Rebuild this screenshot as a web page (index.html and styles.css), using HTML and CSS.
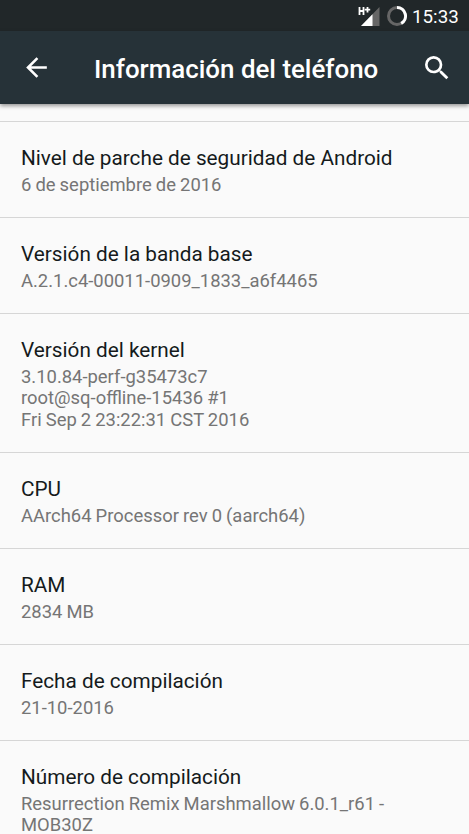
FILE: index.html
```html
<!DOCTYPE html>
<html lang="es">
<head>
<meta charset="utf-8">
<title>Información del teléfono</title>
<link rel="stylesheet" href="styles.css">
</head>
<body>
<div class="status">
  <svg class="signal" width="22" height="22" viewBox="0 0 22 22"><path d="M21.500 2V21H3Z" fill="#666"/><path d="M14.500 9.200V21H3Z" fill="#fff"/><path d="M1.500 2v8M5.500 2v8M1.500 6h4M9.500 2v5.500M6.800 4.700h5.400" stroke="#fff" stroke-width="1.800" fill="none"/></svg>
  <svg class="battery" width="20" height="20" viewBox="0 0 20 20" fill="none" stroke-width="3"><circle cx="10" cy="10" r="8.500" stroke="#666"/><path d="M10 1.500A8.500 8.500 0 0 1 14.200 17.400" stroke="#fff"/></svg>
  <span class="clock">15:33</span>
</div>
<header class="bar">
  <svg class="back" width="31" height="31" viewBox="0 0 24 24"><path fill="#fff" d="M20 11H7.830l5.590-5.590L12 4l-8 8 8 8 1.410-1.410L7.830 13H20z"/></svg>
  <h1>Información del teléfono</h1>
  <svg class="search" width="32" height="32" viewBox="0 0 24 24"><path fill="#fff" d="M15.500 14h-.79l-.28-.27A6.471 6.471 0 0 0 16 9.500 6.500 6.500 0 1 0 9.500 16c1.610 0 3.090-.59 4.230-1.570l.27.28v.79l5 4.990L20.490 19zm-6 0a4.500 4.500 0 1 1 0-9 4.500 4.500 0 0 1 0 9z"/></svg>
</header>
<main>
  <section><h2>Nivel de parche de seguridad de Android</h2><p>6 de septiembre de 2016</p></section>
  <section><h2>Versión de la banda base</h2><p>A.2.1.c4-00011-0909_1833_a6f4465</p></section>
  <section class="tall"><h2>Versión del kernel</h2><p>3.10.84-perf-g35473c7<br>root@sq-offline-15436 #1<br>Fri Sep 2 23:22:31 CST 2016</p></section>
  <section><h2>CPU</h2><p>AArch64 Processor rev 0 (aarch64)</p></section>
  <section><h2>RAM</h2><p>2834 MB</p></section>
  <section><h2>Fecha de compilación</h2><p>21-10-2016</p></section>
  <section><h2>Número de compilación</h2><p>Resurrection Remix Marshmallow 6.0.1_r61 -<br>MOB30Z</p></section>
</main>
</body>
</html>
```
FILE: styles.css
```css
* { box-sizing: border-box; margin: 0; }
body { height: 834px; overflow: hidden; background: #fafafa; font-family: Roboto, sans-serif; }
.status { height: 31px; background: #212729; display: flex; align-items: center; padding-left: 358px; color: #fff; }
.battery { margin-left: 7px; }
.clock { margin-left: 5px; padding-top: 2px; font-size: 18.8px; }
.bar { height: 73px; background: #263238; display: flex; align-items: center; padding-left: 21px; box-shadow: 0 2px 4px #0006; position: relative; color: #fff; }
h1 { margin-left: 42px; padding-top: 2px; width: 327px; font-size: 25.9px; font-weight: 500; white-space: nowrap; }
.search { flex: none; }
main { padding-top: 17px; }
section { height: 96px; border-top: 1px solid #d6d6d6; padding: 23px 21px 0; white-space: nowrap; }
.tall { height: 139px; }
h2 { font-size: 20.75px; line-height: 26px; font-weight: 400; color: #151a1c; }
p { font-size: 18.42px; line-height: 21.3px; padding-top: 3px; color: #757575; word-spacing: -0.5px; }
```
